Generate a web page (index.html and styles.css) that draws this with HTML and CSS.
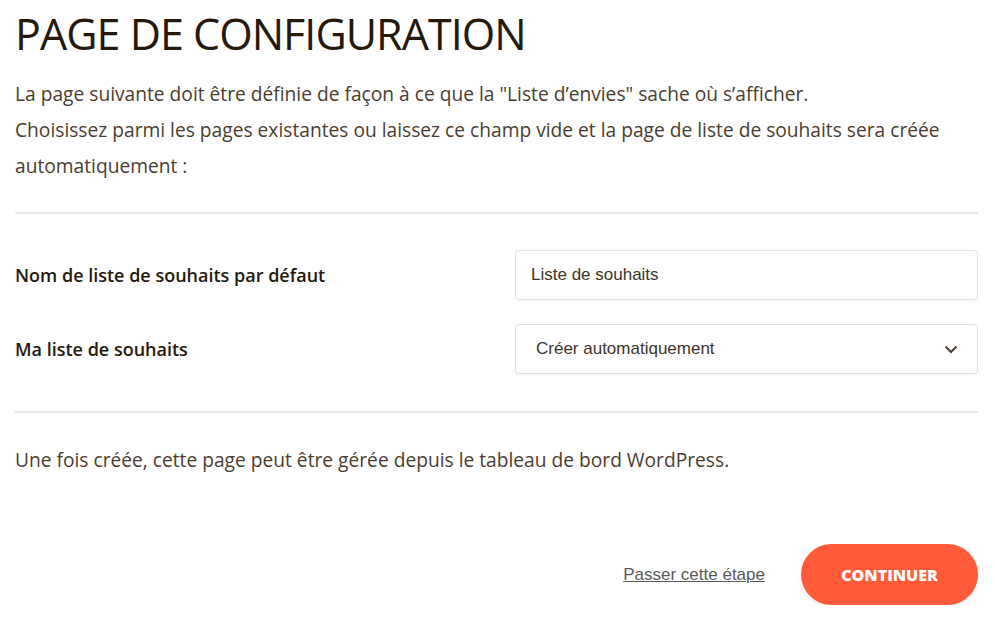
FILE: index.html
```html
<!DOCTYPE html>
<html lang="fr">
<head>
<meta charset="UTF-8">
<title>Page de configuration</title>
<link rel="stylesheet" href="styles.css">
</head>
<body>
    <main class="setup">
        <h1 class="setup-title">PAGE DE CONFIGURATION</h1>

        <div class="intro">
            <p>La page suivante doit être définie de façon à ce que la "Liste d’envies" sache où s’afficher.</p>
            <p>Choisissez parmi les pages existantes ou laissez ce champ vide et la page de liste de souhaits sera créée automatiquement :</p>
        </div>

        <!-- fields -->
        <div class="fields">
            <div class="field-row">
                <label class="field-label" for="wl-name">Nom de liste de souhaits par défaut</label>
                <input class="field-input" id="wl-name" type="text" value="Liste de souhaits">
            </div>
            <div class="field-row">
                <label class="field-label" for="wl-page">Ma liste de souhaits</label>
                <div class="field-select" id="wl-page">
                    <span>Créer automatiquement</span>
                    <svg viewBox="0 0 14 9"><path d="M1.5 1.5l5.5 5.5 5.5-5.5"/></svg>
                </div>
            </div>
        </div>

        <p class="note">Une fois créée, cette page peut être gérée depuis le tableau de bord WordPress.</p>

        <div class="actions">
            <a href="#" class="skip-link">Passer cette étape</a>
            <button class="btn-continue" type="button">CONTINUER</button>
        </div>
    </main>
</body>
</html>
```

FILE: styles.css
```css
*{margin:0;padding:0;box-sizing:border-box}
body{
    font-family:"Open Sans",sans-serif;
    color:#4a3d30;
    background:#fff;
}

.setup{
    width:963px;
    margin-left:15px;
    padding-top:8px;
}

.setup-title{
    font-size:43px;
    font-weight:400;
    color:#25190c;
    line-height:52px;
    letter-spacing:-.95px;
}

/* intro ---------------- */
.intro{
    margin-top:16px;
    padding-bottom:28px;
    border-bottom:2px solid #e8e8e8;
}
.intro p{
    font-size:19.2px;
    line-height:36px;
}

/* fields --------------- */
.fields{
    display:flex;
    flex-direction:column;
    gap:24px;
    padding:36px 0 37px;
    border-bottom:2px solid #e8e8e8;
}
.field-row{
    display:flex;
    align-items:center;
    justify-content:space-between;
}
.field-label{
    font-size:18px;
    font-weight:600;
    color:#25190c;
}
.field-input,
.field-select{
    width:463px;
    height:50px;
    border:1px solid #e2e2e2;
    border-radius:4px;
    box-shadow:0 1px 3px rgba(0,0,0,.05);
    background:#fff;
    font-family:"Liberation Sans",Arial,sans-serif;
    font-size:17px;
    color:#3e342a;
}
.field-input{
    padding:0 15px;
    outline:none;
}
.field-select{
    display:flex;
    align-items:center;
    justify-content:space-between;
    padding:0 19px 0 20px;
}
.field-select svg{
    width:14px;
    height:9px;
    fill:none;
    stroke:#4a4038;
    stroke-width:2;
}

.note{
    font-size:19.2px;
    line-height:36px;
    margin-top:29px;
}

/* actions -------------- */
.actions{
    display:flex;
    justify-content:flex-end;
    align-items:center;
    gap:36px;
    margin-top:66px;
}
.skip-link{
    font-family:"Liberation Sans",Arial,sans-serif;
    font-size:17px;
    color:#5a5a5a;
}
.btn-continue{
    width:177px;
    height:61px;
    border:none;
    border-radius:31px;
    background:#ff5a3a;
    color:#fff;
    font-family:"Open Sans",sans-serif;
    font-size:16px;
    font-weight:800;
    box-shadow:0 2px 4px rgba(0,0,0,.08);
    cursor:pointer;
}
```
